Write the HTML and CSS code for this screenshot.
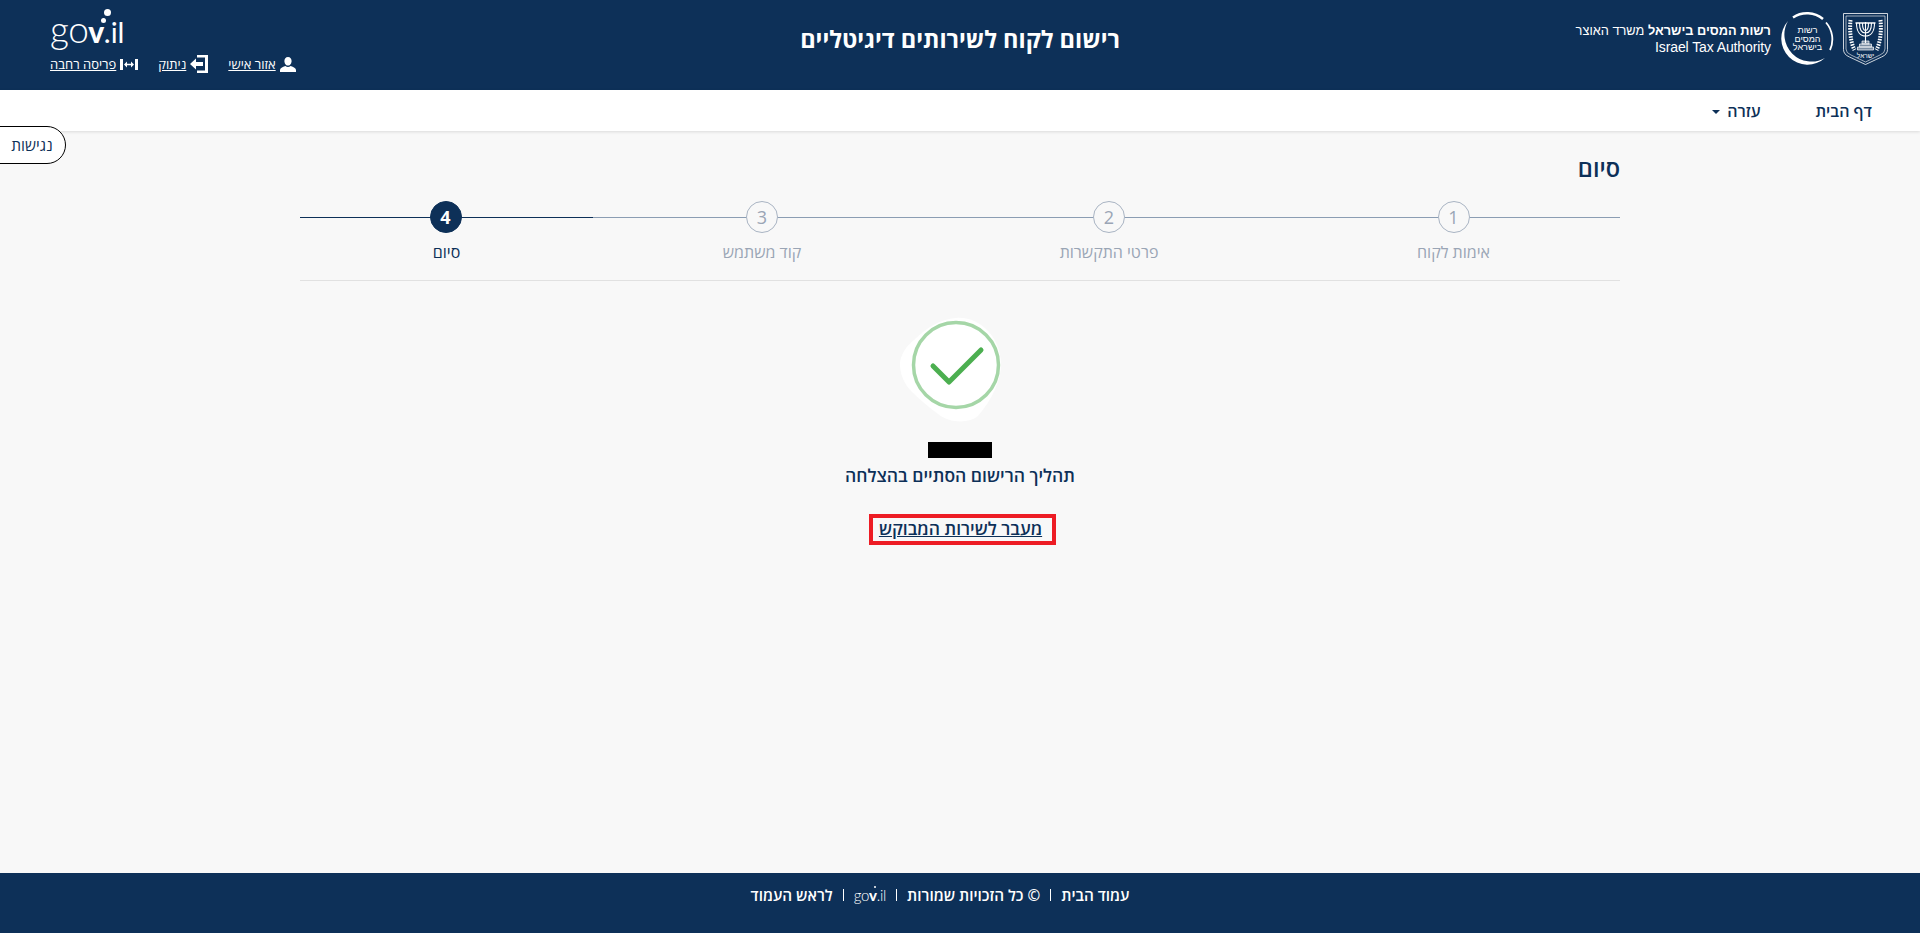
FILE: index.html
```html
<!DOCTYPE html>
<html lang="he" dir="rtl">
<head>
  <meta charset="UTF-8" />
  <title>רישום לקוח לשירותים דיגיטליים</title>
  <link rel="stylesheet" href="styles.css">
</head>
<body>
  <header class="topbar">
    <div class="brand">
      <svg class="emblem" viewBox="0 0 45 52" fill="none" stroke="#fff">
        <path d="M.5.5h44v36q0 5-6 7.500l-16 7.500-16-7.500q-6-2.500-6-7.500z" stroke-width=".8"/>
        <path d="M3 3h39v33q0 4-5 6l-14.500 7-14.500-7q-5-2-5-6z" stroke-width=".6"/>
        <path d="M22.500 9v21M19.500 10c0 5 1 7.500 3 7.500s3-2.500 3-7.500M16.500 10c0 7 2.500 10 6 10s6-3 6-10M13.500 10c0 9 4 13 9 13s9-4 9-13" stroke-width="1.100"/>
        <path d="M12.500 10h20" stroke-width="1.500"/>
        <path d="M19 28h7v3h-7zM16.500 31h12v3h-12zM14.500 34h16v3h-16z" fill="#fff" fill-opacity=".45" stroke-width=".7"/>
        <path d="M7.500 7c-1 11 0 22 4 30M37.500 7c1 11 0 22-4 30" stroke-width="4" stroke-dasharray="1.500 1.200"/>
        <text x="22.500" y="44.500" fill="#fff" stroke="none" font-size="6.500" text-anchor="middle" font-family="Liberation Sans">ישראל</text>
      </svg>
      <div class="tax-seal">
        <svg viewBox="0 0 54 54" fill="none" stroke="#fff">
          <path d="M13 5.500A25.500 25.500 0 0 1 43 7" stroke-width="2.500"/>
          <path d="M46 10.500A25.500 25.500 0 0 1 50 38" stroke-width="1.800"/>
          <path d="M8 9A26.200 26.200 0 0 0 45 46A27.100 27.100 0 0 1 8 9z" fill="#fff" stroke="none"/>
        </svg>
        <span>רשות<br>המסים<br>בישראל</span>
      </div>
      <div class="brand-text">
        <div class="brand-he"><b>רשות המסים בישראל</b> משרד האוצר</div>
        <div>Israel Tax Authority</div>
      </div>
    </div>
    <h1 class="site-title">רישום לקוח לשירותים דיגיטליים</h1>
    <div class="user-box">
      <div class="gov-logo" dir="ltr">go<b>v</b><i class="dots"></i><span>.il</span></div>
      <nav class="user-links">
        <a href="#"><svg class="ic-user" viewBox="0 0 16 15" fill="#fff"><path d="M8 0c2.300 0 3.600 1.800 3.600 3.900S10.300 8.500 8 8.500 4.400 6 4.400 3.900 5.700 0 8 0zM0 15v-2c0-2 2.500-2.800 5.400-4 .8.700 1.700 1 2.600 1s1.800-.3 2.600-1c2.900 1.200 5.400 2 5.400 4v2z"/></svg>אזור אישי</a>
        <a href="#"><svg class="ic-out" viewBox="0 0 18 18" fill="#fff"><path d="M7 0h11v18H7v-2.500h8v-13H7z"/><path d="M0 9l6-5.500V7h7v4H6v3.500z"/></svg>ניתוק</a>
        <a href="#"><svg class="ic-wide" viewBox="0 0 18 11" fill="#fff"><path d="M0 0h3v11H0zM15 0h3v11h-3zM4 5.500l3-3v2.300h4V2.500l3 3-3 3V6.200H7v2.300z"/></svg>פריסה רחבה</a>
      </nav>
    </div>
  </header>

  <nav class="mainnav">
    <a href="#">דף הבית</a>
    <a href="#" class="has-caret">עזרה</a>
  </nav>

  <button class="access-btn" type="button">נגישות</button>

  <main class="content">
    <h2 class="page-title">סיום</h2>

    <ol class="steps">
      <li class="step"><span class="num">1</span><span class="label">אימות לקוח</span></li>
      <li class="step"><span class="num">2</span><span class="label">פרטי התקשרות</span></li>
      <li class="step"><span class="num">3</span><span class="label">קוד משתמש</span></li>
      <li class="step current"><span class="num">4</span><span class="label">סיום</span></li>
    </ol>

    <section class="done">
      <svg class="done-icon" viewBox="0 0 104 108" fill="none">
        <path d="M56 2C80 0 101 22 101 48 101 64 92 84 78 100 70 107 50 108 38 98 30 92 20 84 12 76 4 68 0 58 0 48 0 40 6 30 14 24 26 12 40 3 56 2z" fill="#fff"/>
        <circle cx="56" cy="49" r="42.500" stroke="#a5d6a7" stroke-width="3.500"/>
        <path d="M33 50l16 16 32-32" stroke="#4caf50" stroke-width="5" stroke-linecap="round" stroke-linejoin="round"/>
      </svg>
      <div class="redacted"></div>
      <p class="done-msg">תהליך הרישום הסתיים בהצלחה</p>
      <a class="service-link" href="#">מעבר לשירות המבוקש</a>
    </section>
  </main>

  <footer class="footer">
    <a href="#">עמוד הבית</a>
    <span>© כל הזכויות שמורות</span>
    <span class="gov-small" dir="ltr">go<b>v</b><i class="dot-small"></i>.il</span>
    <a href="#">לראש העמוד</a>
  </footer>
</body>
</html>
```

FILE: styles.css
```css
html, body {
  margin: 0;
  padding: 0;
  height: 933px;
}

body {
  display: flex;
  flex-direction: column;
  background-color: #f8f8f8;
  color: #0d3058;
  font-family: "Open Sans", "Liberation Sans", sans-serif;
  overflow: hidden;
  position: relative;
}

a {
  color: inherit;
}

/* header */
.topbar {
  display: flex;
  align-items: flex-start;
  justify-content: space-between;
  height: 90px;
  background-color: #0d3058;
  color: #fff;
  padding: 0 32px 0 50px;
  flex-shrink: 0;
}

.brand {
  display: flex;
  align-items: center;
  gap: 9px;
  width: 338px;
  height: 78px;
}

.emblem {
  width: 45px;
  height: 52px;
  flex-shrink: 0;
}

.tax-seal {
  position: relative;
  width: 54px;
  height: 54px;
  flex-shrink: 0;
}

.tax-seal svg {
  width: 54px;
  height: 54px;
}

.tax-seal span {
  position: absolute;
  inset: 14px 0 0 1px;
  text-align: center;
  font: 9px/8.5px "Liberation Sans", sans-serif;
}

.brand-text {
  font: 14px/16px "Liberation Sans", sans-serif;
  letter-spacing: -0.1px;
  white-space: nowrap;
}

.brand-he {
  font-size: 12.8px;
  letter-spacing: 0;
}

.site-title {
  margin: 23px 0 0;
  font: bold 23.5px/32px "Open Sans", sans-serif;
}

.user-box {
  width: 320px;
  display: flex;
  flex-direction: column;
  align-items: flex-end;
}

.gov-logo {
  position: relative;
  width: 75px;
  margin-top: 11px;
  font: 300 37px/36px "Lato", sans-serif;
  letter-spacing: -0.5px;
  white-space: nowrap;
  text-align: left;
}

.gov-logo b {
  font-size: 30px;
  font-weight: 900;
}

.gov-logo span {
  font-weight: 400;
  font-size: 29px;
  letter-spacing: 0;
}

.dots {
  position: absolute;
  left: 54px;
  top: -2px;
  width: 7px;
  height: 7px;
  border-radius: 50%;
  background-color: #fff;
  box-shadow: -4px 8px 0 -1px #fff;
}

.user-links {
  display: flex;
  flex-direction: row;
  gap: 20px;
  margin-top: 5px;
  align-self: flex-end;
  font-size: 13px;
  line-height: 18px;
}

.user-links a {
  display: flex;
  align-items: center;
  gap: 4px;
  white-space: nowrap;
}

.ic-user {
  width: 16px;
  height: 15px;
}

.ic-out {
  width: 18px;
  height: 18px;
}

.ic-wide {
  width: 18px;
  height: 11px;
}

/* menu under the header */
.mainnav {
  display: flex;
  gap: 55px;
  height: 41px;
  align-items: center;
  padding: 0 48px;
  background-color: #fff;
  box-shadow: 0 1px 3px rgba(0,0,0,0.12);
  font-size: 16px;
  font-weight: 600;
  flex-shrink: 0;
}

.mainnav a {
  text-decoration: none;
}

.has-caret::after {
  content: "";
  display: inline-block;
  margin-right: 7px;
  vertical-align: middle;
  border-top: 4px solid #0d3058;
  border-left: 4px solid transparent;
  border-right: 4px solid transparent;
}

.access-btn {
  position: absolute;
  left: -2px;
  top: 126px;
  width: 68px;
  height: 38px;
  padding: 0;
  border: 1px solid #000;
  border-radius: 0 19px 19px 0;
  background-color: #fff;
  color: #0d3058;
  font: 15.5px "Open Sans", sans-serif;
}

/* main column */
.content {
  flex: 1;
  width: 1320px;
  margin: 0 auto;
}

.page-title {
  margin: 22px 0 0;
  font-size: 23.5px;
  line-height: 30px;
  font-weight: 600;
}

.steps {
  display: grid;
  grid-template-columns: 333px 356px 338px 293px;
  margin: 18px 0 0;
  padding: 0 0 18px;
  list-style: none;
  border-bottom: 1px solid #e1e1e1;
}

.step {
  position: relative;
  display: flex;
  flex-direction: column;
  align-items: center;
  gap: 9px;
  color: #9aa5b5;
  font-size: 16px;
  line-height: 20px;
}

.step::before {
  content: "";
  position: absolute;
  top: 16px;
  left: 0;
  right: 0;
  height: 1px;
  background-color: #8b9db3;
}

.num {
  position: relative;
  width: 30px;
  height: 30px;
  border: 1px solid #a9b4c3;
  border-radius: 50%;
  background-color: #f8f8f8;
  text-align: center;
  font-size: 18px;
  line-height: 30px;
}

.step.current {
  color: #0d3058;
}

.step.current::before {
  background-color: #0d3058;
}

.step.current .num {
  margin-right: 2px;
  border-color: #0d3058;
  background-color: #0d3058;
  color: #fff;
  font-weight: 700;
}

/* success block */
.done {
  display: flex;
  flex-direction: column;
  align-items: center;
}

.done-icon {
  width: 104px;
  height: 108px;
  margin-top: 35px;
  margin-right: 16px;
}

.redacted {
  width: 64px;
  height: 16px;
  margin-top: 18px;
  background-color: #000;
}

.done-msg {
  margin: 5px 0 0;
  font-size: 17.5px;
  line-height: 24px;
  font-weight: 600;
}

.service-link {
  margin: 27px 0 0 5px;
  padding: 0 10px 2px 6px;
  border: 4px solid #ed1c24;
  font-size: 17.5px;
  line-height: 21px;
  font-weight: 600;
}

/* footer */
.footer {
  display: flex;
  justify-content: center;
  align-items: flex-start;
  height: 60px;
  padding: 12px 40px 0 0;
  box-sizing: border-box;
  background-color: #0d3058;
  color: #fff;
  font-size: 15.3px;
  line-height: 20px;
  font-weight: 600;
  flex-shrink: 0;
}

.footer a {
  text-decoration: none;
}

.footer > * {
  padding: 0 10px;
  border-left: 1px solid #fff;
  line-height: 12px;
  margin-top: 4px;
}

.footer > *:last-child {
  border-left: none;
}

.gov-small {
  position: relative;
  font: 300 15px/12px "Lato", sans-serif;
  letter-spacing: -0.3px;
}

.gov-small b {
  font-weight: 900;
}

.dot-small {
  position: absolute;
  left: 30px;
  top: -3px;
  width: 2px;
  height: 2px;
  border-radius: 50%;
  background-color: #fff;
}
```
